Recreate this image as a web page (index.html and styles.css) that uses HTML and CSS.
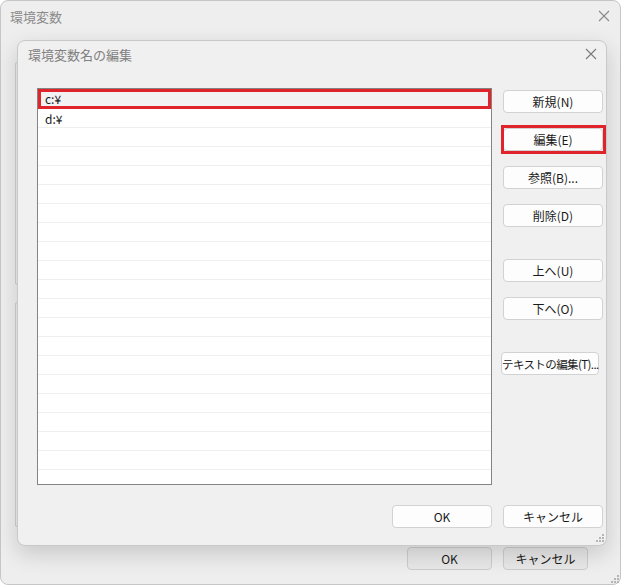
FILE: index.html
```html
<!DOCTYPE html>
<html lang="ja">
<head>
  <meta charset="UTF-8">
  <meta name="viewport" content="width=device-width, initial-scale=1.0">
  <title>環境変数名の編集</title>
  <link rel="stylesheet" href="styles.css">
</head>
<body>
  <div class="window">
    <div class="titlebar">
      <span class="title">環境変数</span>
      <svg class="close" width="12" height="12" viewBox="0 0 12 12"><path d="M1 1 L11 11 M11 1 L1 11" stroke="#8a8a8a" stroke-width="1.1" fill="none"/></svg>
    </div>

    <div class="window-body">
      <div class="group group-user"></div>
      <div class="group group-system"></div>
    </div>

    <div class="window-footer">
      <button class="btn btn-inactive">OK</button>
      <button class="btn btn-inactive">キャンセル</button>
    </div>
    <svg class="grip grip-window" width="8" height="8" viewBox="0 0 8 8">
      <rect x="6" y="0" width="2" height="2" fill="#b5b5b5"/>
      <rect x="3" y="3" width="2" height="2" fill="#b5b5b5"/><rect x="6" y="3" width="2" height="2" fill="#b5b5b5"/>
      <rect x="0" y="6" width="2" height="2" fill="#b5b5b5"/><rect x="3" y="6" width="2" height="2" fill="#b5b5b5"/><rect x="6" y="6" width="2" height="2" fill="#b5b5b5"/>
    </svg>

    <!-- edit dialog sits on top of the parent window -->
    <div class="dialog">
      <div class="titlebar dialog-titlebar">
        <span class="title">環境変数名の編集</span>
        <svg class="close" width="12" height="12" viewBox="0 0 12 12"><path d="M1 1 L11 11 M11 1 L1 11" stroke="#7a7a7a" stroke-width="1.1" fill="none"/></svg>
      </div>

      <div class="dialog-main">
        <div class="path-list">
          <div class="row selected">c:¥</div>
          <div class="row">d:¥</div>
          <div class="row"></div>
          <div class="row"></div>
          <div class="row"></div>
          <div class="row"></div>
          <div class="row"></div>
          <div class="row"></div>
          <div class="row"></div>
          <div class="row"></div>
          <div class="row"></div>
          <div class="row"></div>
          <div class="row"></div>
          <div class="row"></div>
          <div class="row"></div>
          <div class="row"></div>
          <div class="row"></div>
          <div class="row"></div>
          <div class="row"></div>
          <div class="row"></div>
          <div class="row"></div>
        </div>

        <div class="side-buttons">
          <button class="btn">新規(N)</button>
          <button class="btn highlight">編集(E)</button>
          <button class="btn">参照(B)...</button>
          <button class="btn spaced">削除(D)</button>
          <button class="btn">上へ(U)</button>
          <button class="btn spaced">下へ(O)</button>
          <button class="btn btn-text">テキストの編集(T)...</button>
        </div>
      </div>

      <div class="dialog-footer">
        <button class="btn">OK</button>
        <button class="btn">キャンセル</button>
      </div>
      <svg class="grip grip-dialog" width="8" height="8" viewBox="0 0 8 8">
        <rect x="6" y="0" width="2" height="2" fill="#b5b5b5"/>
        <rect x="3" y="3" width="2" height="2" fill="#b5b5b5"/><rect x="6" y="3" width="2" height="2" fill="#b5b5b5"/>
        <rect x="0" y="6" width="2" height="2" fill="#b5b5b5"/><rect x="3" y="6" width="2" height="2" fill="#b5b5b5"/><rect x="6" y="6" width="2" height="2" fill="#b5b5b5"/>
      </svg>
    </div>
  </div>
</body>
</html>
```

FILE: styles.css
```css
* {
  box-sizing: border-box;
}
body {
  margin: 0;
  background-color: #ffffff;
  font-family: "Noto Sans CJK JP", "Noto Sans", sans-serif;
  font-size: 12px;
  color: #1a1a1a;
}
.window {
  position: relative;
  width: 621px;
  height: 585px;
  display: flex;
  flex-direction: column;
  background-color: #eeeeee;
  border: 1px solid #c6c6c6;
  border-radius: 8px;
}
.titlebar {
  height: 30px;
  display: flex;
  justify-content: space-between;
  align-items: center;
  padding: 0 10px 0 9px;
}
.title {
  font-size: 13px;
  color: #8a8a8a;
}
.window-body {
  flex: 1;
  display: flex;
  flex-direction: column;
  gap: 17px;
  padding: 31px 24px 0 14px;
}
.group {
  border: 1px solid #cfcfcf;
  border-radius: 2px;
}
.group-user {
  height: 223px;
}
.group-system {
  height: 225px;
}
.window-footer {
  display: flex;
  justify-content: flex-end;
  gap: 11px;
  padding: 19px 32px 14px 0;
}
.btn {
  position: relative;
  height: 23px;
  width: 100px;
  padding: 0;
  white-space: nowrap;
  background-color: #fdfdfd;
  border: 1px solid #d2d2d2;
  border-radius: 4px;
  font-family: inherit;
  font-size: 12px;
  color: #1a1a1a;
}
.btn-inactive {
  width: 85px;
  height: 23px;
  background-color: #e8e8e8;
  border-color: #cdcdcd;
}
.grip {
  position: absolute;
}
.grip-window {
  right: 1px;
  bottom: 1px;
}
.dialog {
  position: absolute;
  left: 16px;
  top: 39px;
  width: 590px;
  height: 506px;
  display: flex;
  flex-direction: column;
  background-color: #f0f0f0;
  border: 1px solid #c9c9c9;
  border-radius: 8px;
  box-shadow: 0 8px 22px rgba(0, 0, 0, 0.16);
}
.dialog-titlebar {
  height: 26px;
  padding: 0 9px 0 10px;
}
.dialog-titlebar .title {
  color: #808080;
}
.dialog-main {
  display: flex;
  padding: 21px 0 0 19px;
}
.path-list {
  width: 455px;
  height: 397px;
  overflow: hidden;
  background-color: #ffffff;
  border: 1px solid #848484;
}
.row {
  position: relative;
  height: 19px;
  line-height: 19px;
  padding-left: 7px;
  border-bottom: 1px solid #efefef;
}
.row.selected {
  height: 20px;
  line-height: 20px;
  background-color: #f2f2f2;
  border-bottom: none;
}
.row.selected::after {
  content: "";
  position: absolute;
  left: 0;
  right: 0;
  top: 0;
  bottom: 0;
  border: 3px solid #e0242b;
}
.side-buttons {
  display: flex;
  flex-direction: column;
  gap: 15px;
  margin-left: 11px;
  padding-top: 2px;
}
.side-buttons .spaced {
  margin-bottom: 17px;
}
/* red marker drawn square over the rounded button */
.btn.highlight::after {
  content: "";
  position: absolute;
  left: -3px;
  right: -4px;
  top: -4px;
  bottom: -4px;
  border: 3px solid #e0242b;
}
.btn.btn-text {
  width: 98px;
  margin-left: -2px;
  font-size: 11.5px;
  letter-spacing: -0.6px;
}
.dialog-footer {
  display: flex;
  justify-content: flex-end;
  gap: 11px;
  padding: 20px 3px 0 0;
}
.grip-dialog {
  right: 2px;
  bottom: 3px;
}
```
